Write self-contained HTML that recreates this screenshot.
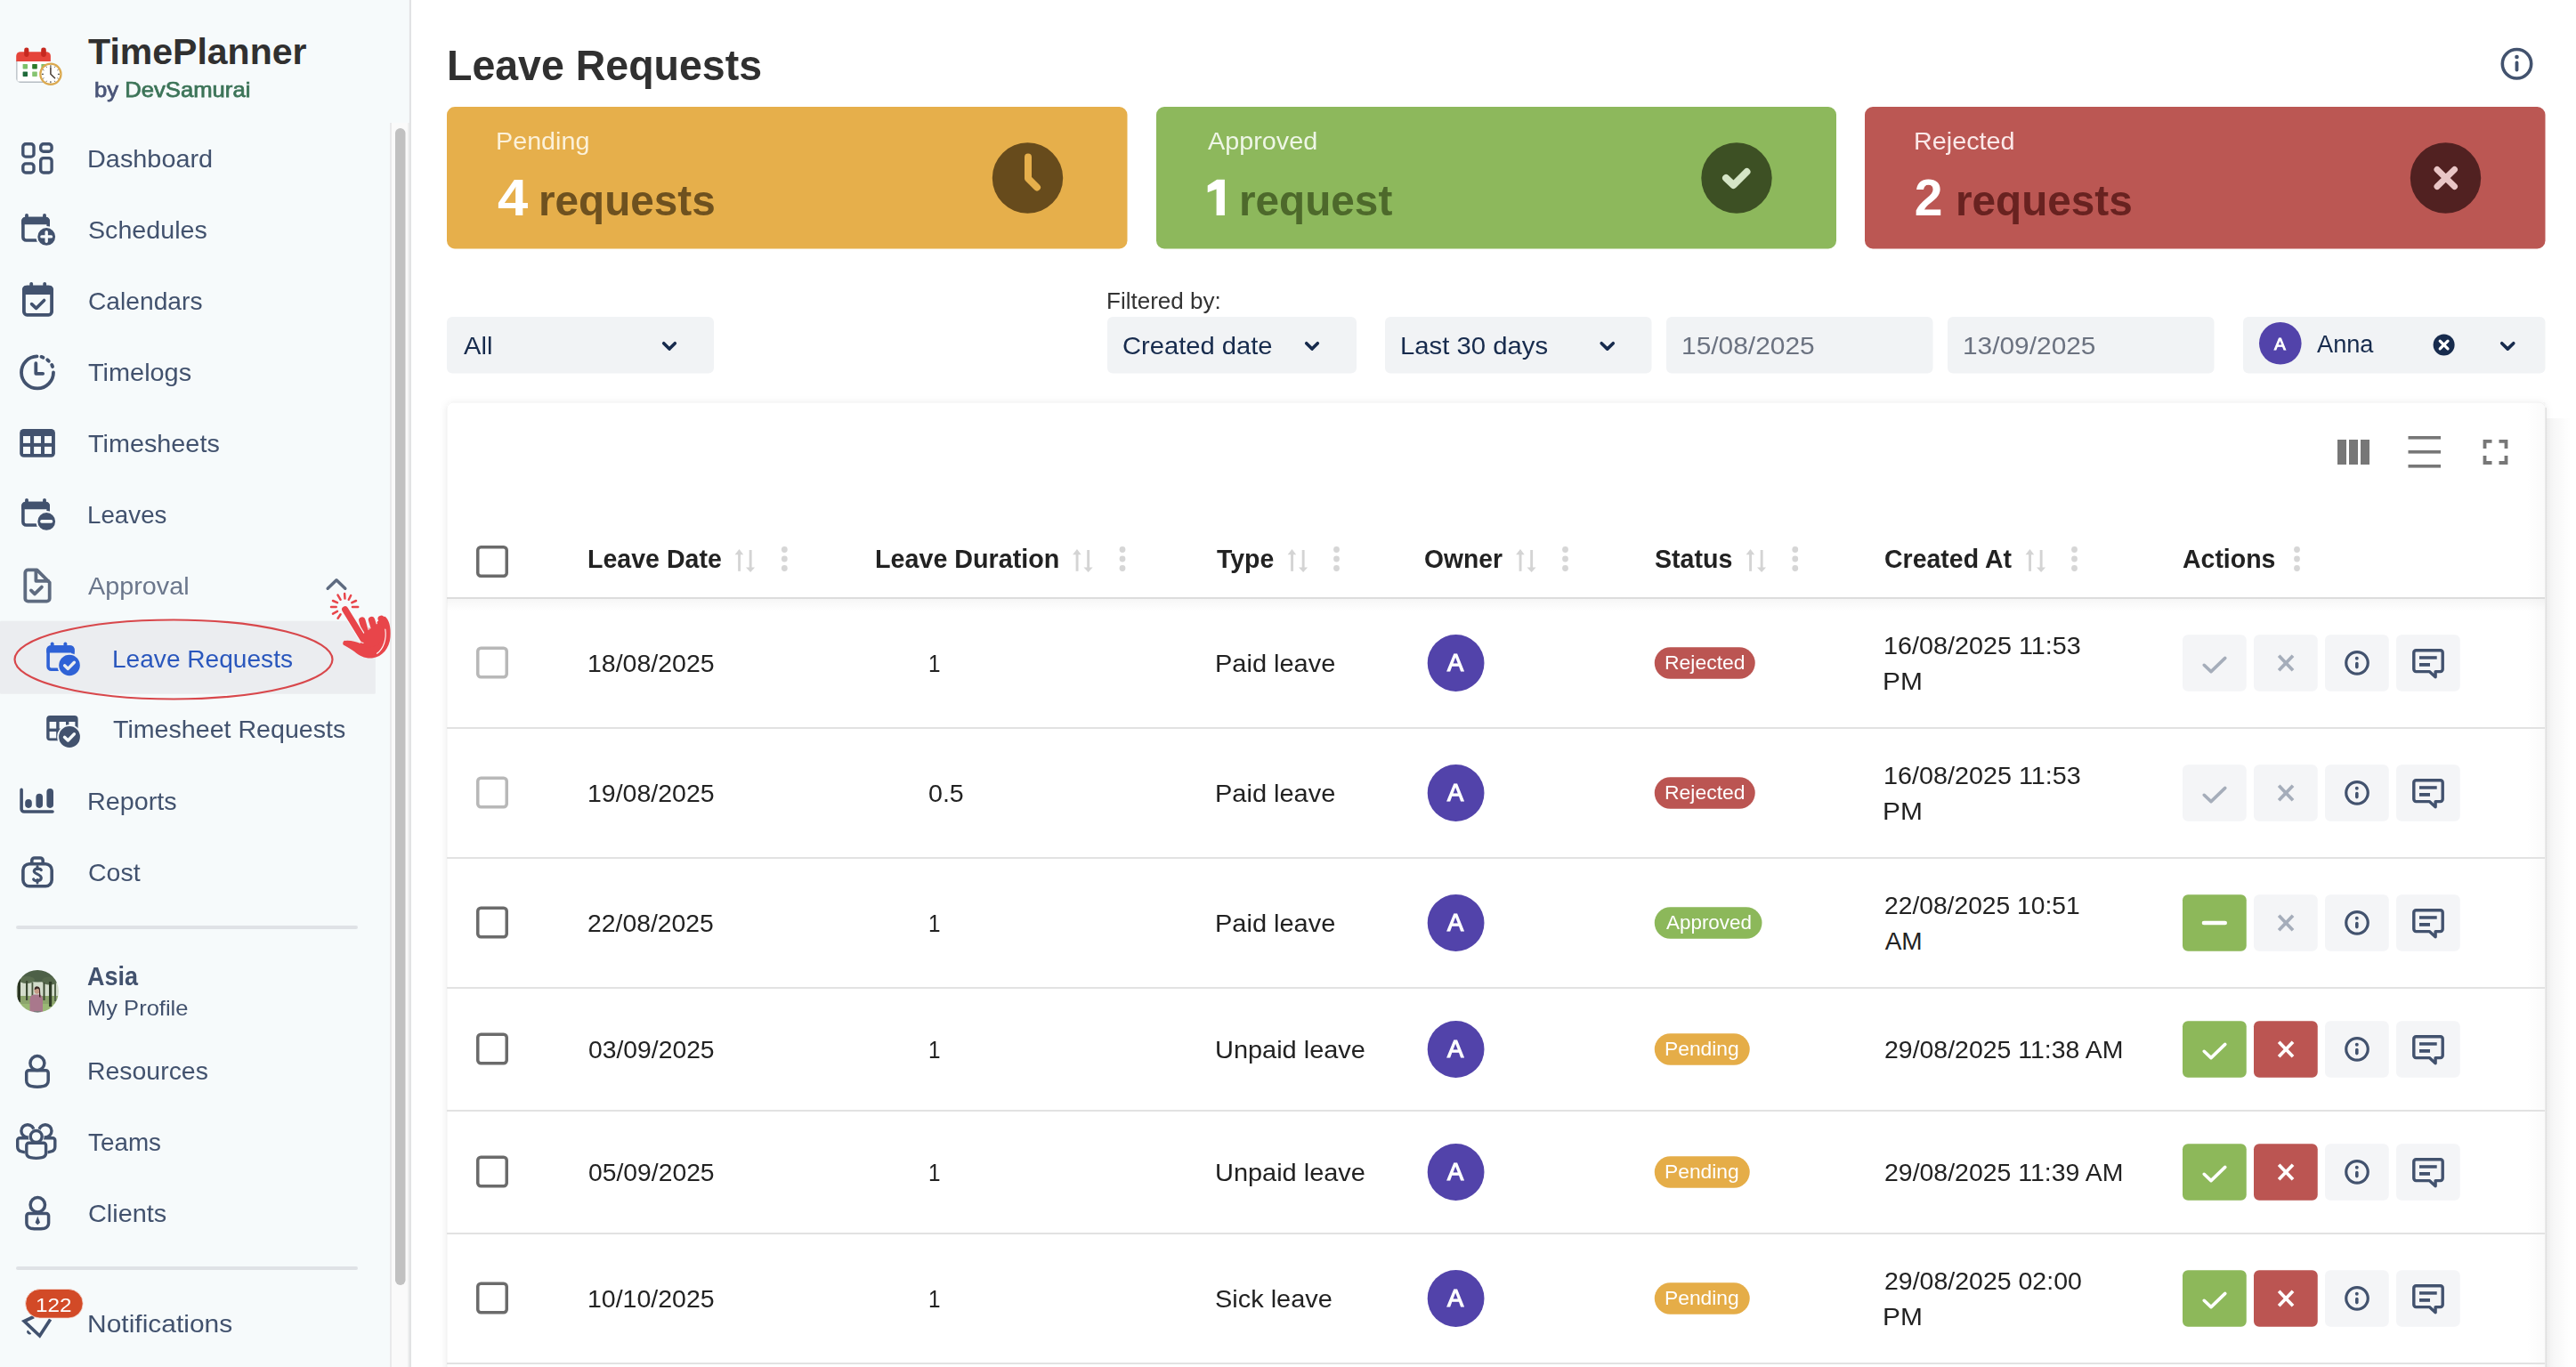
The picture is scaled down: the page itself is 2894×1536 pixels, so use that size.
<!DOCTYPE html>
<html><head><meta charset="utf-8"><title>Leave Requests - TimePlanner</title>
<style>
html,body{margin:0;padding:0;width:2894px;height:1536px;overflow:hidden;background:#fff;}
#t div{position:absolute;white-space:nowrap;font-family:"Liberation Sans", sans-serif;}
svg{position:absolute;left:0;top:0;}
</style></head><body>
<svg width="2894" height="1536" viewBox="0 0 2894 1536">
<rect x="0" y="0" width="460" height="1536" fill="#f6fafb"/>
<rect x="459.9" y="0" width="2" height="1536" fill="#e0e1e3"/>
<rect x="439.8" y="138" width="18.5" height="1398" fill="#fafafa"/><rect x="438.2" y="138" width="1.6" height="1398" fill="#e5e5e6"/>
<rect x="458.3" y="138" width="1.6" height="1398" fill="#ececec"/>
<rect x="444" y="144" width="11.5" height="1300" rx="5.75" fill="#c1c1c1"/>
<g>
<path d="M19.5 68 V88.2 a3.5 3.5 0 0 0 3.5 3.5 H52" fill="none" stroke="#b5bcc2" stroke-width="2.6"/>
<rect x="19.5" y="63" width="37.4" height="28.5" fill="#fff"/>
<path d="M18.2 69 V63 a4.8 4.8 0 0 1 4.8 -4.8 H52.1 a4.8 4.8 0 0 1 4.8 4.8 V69 Z" fill="#e5443a"/>
<rect x="27.2" y="53.6" width="5.2" height="10.4" rx="2.4" fill="#c6281f"/>
<rect x="46.2" y="53.6" width="5.6" height="10.4" rx="2.4" fill="#c6281f"/>
<rect x="25.6" y="72" width="5.4" height="5.4" rx="0.6" fill="#7cc06a"/>
<rect x="36.2" y="72" width="5.6" height="5.4" rx="0.6" fill="#2d7a2a"/>
<rect x="46.4" y="72" width="5.6" height="5.4" rx="0.6" fill="#7cc06a"/>
<rect x="25.6" y="80.4" width="5.4" height="5.5" rx="0.6" fill="#1f6a3a"/>
<rect x="36.2" y="80.4" width="5.6" height="5.5" rx="0.6" fill="#86c472"/>
<circle cx="56.9" cy="83.3" r="11.6" fill="#fff" stroke="#dba94f" stroke-width="2.2"/>
<path d="M56.90 75.30 L56.90 73.30" stroke="#3a3a3a" stroke-width="1.1"/><path d="M61.20 75.85 L61.90 74.64" stroke="#3a3a3a" stroke-width="0.8"/><path d="M64.35 79.00 L65.56 78.30" stroke="#3a3a3a" stroke-width="0.8"/><path d="M64.90 83.30 L66.90 83.30" stroke="#3a3a3a" stroke-width="1.1"/><path d="M64.35 87.60 L65.56 88.30" stroke="#3a3a3a" stroke-width="0.8"/><path d="M61.20 90.75 L61.90 91.96" stroke="#3a3a3a" stroke-width="0.8"/><path d="M56.90 91.30 L56.90 93.30" stroke="#3a3a3a" stroke-width="1.1"/><path d="M52.60 90.75 L51.90 91.96" stroke="#3a3a3a" stroke-width="0.8"/><path d="M49.45 87.60 L48.24 88.30" stroke="#3a3a3a" stroke-width="0.8"/><path d="M48.90 83.30 L46.90 83.30" stroke="#3a3a3a" stroke-width="1.1"/><path d="M49.45 79.00 L48.24 78.30" stroke="#3a3a3a" stroke-width="0.8"/><path d="M52.60 75.85 L51.90 74.64" stroke="#3a3a3a" stroke-width="0.8"/>
<path d="M56.9 76 V83.3 L61.6 87.8" stroke="#453a33" stroke-width="1.5" fill="none" stroke-linecap="round"/>
</g>
<rect x="0" y="697.8" width="421.8" height="82" rx="1" fill="#ebedf0"/>
<rect x="18" y="1040" width="384" height="4" rx="2" fill="#dfe2e6"/>
<rect x="18" y="1423" width="384" height="4" rx="2" fill="#dfe2e6"/>
<defs><clipPath id="pc"><circle cx="42.15" cy="1113.85" r="23.8"/></clipPath>
<filter id="blur1"><feGaussianBlur stdDeviation="0.7"/></filter></defs>
<g clip-path="url(#pc)"><g filter="url(#blur1)">
<rect x="16" y="1088" width="52" height="52" fill="#9fb08a"/>
<rect x="16" y="1101" width="52" height="19" fill="#d3dccb"/>
<rect x="16" y="1119" width="52" height="21" fill="#8ca56c"/>
<rect x="16" y="1128" width="52" height="12" fill="#9ab874"/>
<ellipse cx="42" cy="1094" rx="30" ry="9.5" fill="#4e6146"/>
<ellipse cx="30" cy="1101" rx="9" ry="4" fill="#5a6d50"/><ellipse cx="56" cy="1102" rx="9" ry="4.5" fill="#55684c"/>
<rect x="19.5" y="1100" width="3.5" height="26" fill="#2b3524"/><rect x="29" y="1102" width="2.2" height="22" fill="#3b4a31"/>
<rect x="35.5" y="1104" width="1.8" height="16" fill="#46553a"/><rect x="48.5" y="1104" width="2" height="20" fill="#3b4a31"/>
<rect x="55" y="1103" width="3.2" height="28" fill="#2f3b27"/><rect x="61" y="1105" width="2" height="20" fill="#53644a"/>
<path d="M33.5 1138 V1122 Q34.5 1117.5 39 1117.5 H44 Q47.5 1118 48 1122 V1138 Z" fill="#a9788c"/>
<ellipse cx="41.6" cy="1112.8" rx="3.1" ry="4" fill="#c49a86"/>
<path d="M38.5 1111.5 Q39.5 1107.5 42 1108.5 Q44.8 1108.5 45 1112 L45.5 1121 L44 1120 L44 1112 Q42 1109.5 40 1112 Z" fill="#3a2622"/>
<rect x="38" y="1136" width="8" height="3" fill="#7a7a7a"/>
</g></g>
<g fill="none" stroke="#42526e" stroke-width="3.4">
<rect x="25.8" y="161.7" width="12.2" height="14.4" rx="3.2"/>
<rect x="45.7" y="161.7" width="12.4" height="8.5" rx="3.2"/>
<rect x="25.8" y="183.9" width="12.2" height="10.1" rx="3.2"/>
<rect x="45.7" y="177.6" width="12.4" height="16.4" rx="3.2"/>
</g>
<rect x="25.900000000000002" y="245.5" width="28.299999999999997" height="24.50000000000002" rx="3.5" fill="none" stroke="#42526e" stroke-width="3.6"/><path d="M24.1 252.3 V248.2 a4.5 4.5 0 0 1 4.5 -4.5 H51.5 a4.5 4.5 0 0 1 4.5 4.5 V252.3 Z" fill="#42526e"/><rect x="28.1" y="239.89999999999998" width="3.8" height="6" rx="1.9" fill="#42526e"/><rect x="48.1" y="239.89999999999998" width="3.8" height="6" rx="1.9" fill="#42526e"/>
<circle cx="52.2" cy="265.9" r="11.8" fill="#f6fafb"/><circle cx="52.2" cy="265.9" r="9.9" fill="#42526e"/><path d="M52.2 260.6 V271.2 M46.9 265.9 H57.5" stroke="#f6fafb" stroke-width="3.4" stroke-linecap="round"/>
<rect x="26.9" y="322.59999999999997" width="31.2" height="31.2" rx="3.5" fill="none" stroke="#42526e" stroke-width="3.8"/><path d="M25 330.9 V325.2 a4.5 4.5 0 0 1 4.5 -4.5 H55.5 a4.5 4.5 0 0 1 4.5 4.5 V330.9 Z" fill="#42526e"/><rect x="33.3" y="316.9" width="3.8" height="6" rx="1.9" fill="#42526e"/><rect x="48.3" y="316.9" width="3.8" height="6" rx="1.9" fill="#42526e"/>
<path d="M35.6 341.6 L40.6 346.4 L49.6 337.4" fill="none" stroke="#42526e" stroke-width="3.6" stroke-linecap="round" stroke-linejoin="round"/>
<g fill="none" stroke="#42526e" stroke-width="3.8" stroke-linecap="round">
<path d="M41.5 400.4 A18 18 0 1 0 60 418.4"/>
<path d="M46.5 400.9 A18 18 0 0 1 48.5 401.7"/><path d="M53.2 404.3 A18 18 0 0 1 54.8 405.8"/><path d="M58.2 410.0 A18 18 0 0 1 59.1 412.0"/>
<path d="M40.3 408.2 V419.8 H48.2" stroke-linejoin="round"/>
</g>
<rect x="22.2" y="482" width="39.7" height="31.8" rx="4.5" fill="#42526e"/>
<g fill="#f6fafb"><rect x="26" y="490" width="8" height="7.9"/><rect x="38.1" y="490" width="7.9" height="7.9"/><rect x="50" y="490" width="8" height="7.9"/>
<rect x="26" y="501.9" width="8" height="8.1"/><rect x="38.1" y="501.9" width="7.9" height="8.1"/><rect x="50" y="501.9" width="8" height="8.1"/></g>
<rect x="25.900000000000002" y="565.5" width="28.299999999999997" height="24.499999999999908" rx="3.5" fill="none" stroke="#42526e" stroke-width="3.6"/><path d="M24.1 572.3 V568.2 a4.5 4.5 0 0 1 4.5 -4.5 H51.5 a4.5 4.5 0 0 1 4.5 4.5 V572.3 Z" fill="#42526e"/><rect x="28.1" y="559.9000000000001" width="3.8" height="6" rx="1.9" fill="#42526e"/><rect x="48.1" y="559.9000000000001" width="3.8" height="6" rx="1.9" fill="#42526e"/>
<circle cx="52.2" cy="585.9" r="11.8" fill="#f6fafb"/><circle cx="52.2" cy="585.9" r="9.9" fill="#42526e"/><path d="M46.9 585.9 H57.5" stroke="#f6fafb" stroke-width="3.6" stroke-linecap="round"/>
<g fill="none" stroke="#5e6b80" stroke-width="3.8" stroke-linejoin="round">
<path d="M31 640.3 H41.5 L55.7 654.5 V672.5 a3.2 3.2 0 0 1 -3.2 3.2 H31.5 a3.2 3.2 0 0 1 -3.2 -3.2 V643.5 a3.2 3.2 0 0 1 3.2 -3.2 Z"/>
<path d="M40.4 640.5 V652.8 H55.5"/>
<path d="M34.9 663.4 L39 667.4 L46.9 659.6" stroke-linecap="round"/>
</g>
<path d="M368.2 661.2 L378 651.8 L387.8 661.2" fill="none" stroke="#5e6b80" stroke-width="3.5" stroke-linecap="round" stroke-linejoin="round"/>
<rect x="54.099999999999994" y="727.0" width="27.800000000000004" height="25.199999999999953" rx="3.5" fill="none" stroke="#2f62d6" stroke-width="3.6"/><path d="M52.3 733.5 V729.7 a4.5 4.5 0 0 1 4.5 -4.5 H79.2 a4.5 4.5 0 0 1 4.5 4.5 V733.5 Z" fill="#2f62d6"/><rect x="56.8" y="721.4000000000001" width="3.8" height="6" rx="1.9" fill="#2f62d6"/><rect x="71.5" y="721.4000000000001" width="3.8" height="6" rx="1.9" fill="#2f62d6"/>
<circle cx="78" cy="747.5" r="13.6" fill="#ebedf0"/><circle cx="78" cy="747.5" r="11.8" fill="#2f62d6"/><path d="M72.6 747.8 L76.4 751.4 L83.4 744.2" fill="none" stroke="#ebedf0" stroke-width="3.4" stroke-linecap="round" stroke-linejoin="round"/>
<rect x="52.2" y="804.1" width="35.4" height="28.2" rx="4" fill="#42526e"/>
<g fill="#f6fafb"><rect x="55.6" y="811" width="7.6" height="7.6"/><rect x="66.6" y="811" width="7.4" height="7.6"/><rect x="77.4" y="811" width="7" height="7.6"/>
<rect x="55.6" y="822" width="7.6" height="7.4"/></g>
<circle cx="78" cy="828" r="13.8" fill="#f6fafb"/><circle cx="78" cy="828" r="11.9" fill="#42526e"/>
<path d="M72.5 828.3 L76.4 832 L83.4 824.8" fill="none" stroke="#f6fafb" stroke-width="3.4" stroke-linecap="round" stroke-linejoin="round"/>
<path d="M24.1 887.4 V909 a3 3 0 0 0 3 3 H59" fill="none" stroke="#42526e" stroke-width="3.6" stroke-linecap="round"/>
<g stroke="#42526e" stroke-width="7.6" stroke-linecap="round"><path d="M32 901.7 V904.1"/><path d="M44.2 895.5 V904.1"/><path d="M56.2 889.7 V904.1"/></g>
<g fill="none" stroke="#42526e" stroke-width="3.6">
<rect x="25.9" y="970.7" width="32.3" height="25.1" rx="7"/>
<path d="M35.8 970.5 V967 a3 3 0 0 1 3 -3 H45.2 a3 3 0 0 1 3 3 V970.5"/>
</g>
<path d="M46.3 977.6 C45.5 975.8 39 975 38.3 978.6 C37.6 982 46.6 982.3 46.3 986.6 C46 990.6 38.6 990.2 37.7 988" fill="none" stroke="#42526e" stroke-width="3.2" stroke-linecap="round"/>
<path d="M42 973.5 V976.5 M42 988.5 V992" stroke="#42526e" stroke-width="3" stroke-linecap="round"/>
<g fill="none" stroke="#42526e" stroke-width="3.5">
<circle cx="41.9" cy="1194.6" r="8"/>
<path d="M32.5 1202.8 H51.5 a2.7 2.7 0 0 1 2.7 2.7 V1214 a6.5 6.5 0 0 1 -5 6.4 Q41.9 1222 34.7 1220.4 a6.5 6.5 0 0 1 -5 -6.4 V1205.5 a2.7 2.7 0 0 1 2.7 -2.7 Z"/>
</g>
<g fill="none" stroke="#42526e" stroke-width="3.4">
<circle cx="31" cy="1270.8" r="7.1"/><circle cx="50.9" cy="1270.8" r="7.1"/>
<path d="M33 1278.7 H22.2 a2.5 2.5 0 0 0 -2.5 2.5 V1288.5 a5.5 5.5 0 0 0 4.5 5.4 L29.5 1295.2"/>
<path d="M48.5 1278.7 H59.3 a2.5 2.5 0 0 1 2.5 2.5 V1288.5 a5.5 5.5 0 0 1 -4.5 5.4 L52 1295.2"/>
</g>
<circle cx="40.7" cy="1277" r="9" fill="#f6fafb"/>
<path d="M27.9 1283 H53.5 V1301 H27.9Z" fill="#f6fafb"/>
<g fill="none" stroke="#42526e" stroke-width="3.4">
<circle cx="40.7" cy="1277" r="6.5"/>
<path d="M32.4 1284.3 H49 a2.6 2.6 0 0 1 2.6 2.6 V1295.3 a5.5 5.5 0 0 1 -4.5 5.4 Q40.7 1302 34.3 1300.7 a5.5 5.5 0 0 1 -4.5 -5.4 V1286.9 a2.6 2.6 0 0 1 2.6 -2.6 Z"/>
</g>
<g fill="none" stroke="#42526e" stroke-width="3.5">
<circle cx="42.3" cy="1353.7" r="8.2"/>
<path d="M32.6 1363.4 H52 a2.6 2.6 0 0 1 2.6 2.6 V1374.3 a6 6 0 0 1 -4.9 5.9 Q42.3 1381.4 34.8 1380.2 a6 6 0 0 1 -4.9 -5.9 V1366 a2.6 2.6 0 0 1 2.6 -2.6 Z"/>
</g>
<path d="M42.3 1366.5 L45 1373.8 L42.3 1376.2 L39.6 1373.8 Z" fill="#42526e"/>
<path d="M38 1479.5 L27.2 1484.6 L44.6 1501 L56.6 1482.5" fill="none" stroke="#42526e" stroke-width="3.7" stroke-linejoin="miter"/>
<path d="M31.2 1494.5 a2.8 2.8 0 1 0 4 3.9 Z" fill="#42526e"/>
<rect x="28.6" y="1448.5" width="64.6" height="32.6" rx="16.3" fill="#d24a27" stroke="#f6e2dc" stroke-width="0.8"/>
<ellipse cx="195" cy="741" rx="178.5" ry="44.5" fill="none" stroke="#d8474b" stroke-width="2.2"/>
<g stroke="#e8454a" stroke-linecap="round" stroke-width="2.5" fill="none">
<path d="M379.5 668.6 L382.6 673.8"/><path d="M387.1 667 L387.5 672.6"/><path d="M394.2 669 L391.8 673.8"/>
<path d="M374 675 L379 677.2"/><path d="M400 675 L395.3 677.2"/><path d="M372 681.9 L377.7 681.9"/><path d="M402.2 681.9 L396 681.9"/>
<path d="M374 689.6 L379 686.9"/><path d="M379.6 694.8 L382.6 690.2"/>
</g>
<g fill="#e8454a">
<path d="M404 713 L432 692.5 C437 695 439.5 705 438.5 716 C437.5 728 430 738 418 739.5 C410 740 404 737 398 732 C394 729 390 727 387.5 725.5 a2.8 2.8 0 0 1 1.2 -5.6 C394 719.5 400 721 405 723 Z"/>
</g>

<path d="M431.5 703 L428.2 695.3" stroke="#e8454a" stroke-width="7.4" stroke-linecap="round" fill="none"/>
<path d="M421 708 L417.5 696.5" stroke="#f6fafb" stroke-width="9.8" stroke-linecap="round" fill="none"/>
<path d="M421 708 L417.5 696.5" stroke="#e8454a" stroke-width="7.4" stroke-linecap="round" fill="none"/>
<path d="M411 712 L406.8 697" stroke="#f6fafb" stroke-width="9.8" stroke-linecap="round" fill="none"/>
<path d="M411 712 L406.8 697" stroke="#e8454a" stroke-width="7.4" stroke-linecap="round" fill="none"/>
<path d="M408 718 L387.7 684.8" stroke="#f6fafb" stroke-width="9.6" stroke-linecap="round" fill="none"/>
<path d="M408 718 L387.7 684.8" stroke="#e8454a" stroke-width="7.2" stroke-linecap="round" fill="none"/>
<path d="M404 715 L412 728 L425 725 L434 708 L425 700 Z" fill="#e8454a"/>
<path d="M432.8 707 C434.5 718 431 729 423.5 734.3" fill="none" stroke="#fff" stroke-width="1.1" stroke-linecap="round"/>

<circle cx="2827.5" cy="71.75" r="16.2" fill="none" stroke="#42526e" stroke-width="3.6"/><circle cx="2827.5" cy="64" r="2.3" fill="#42526e"/><rect x="2825.6" y="68.5" width="3.8" height="12" rx="1.9" fill="#42526e"/>
<rect x="502" y="120" width="764.5" height="159.5" rx="9" fill="#e6af4b"/>
<circle cx="1154.5" cy="200" r="39.7" fill="#674b1c"/>
<rect x="1299" y="120" width="764" height="159.5" rx="9" fill="#8db85c"/>
<path d="M1367.2 201.7 H1375.9 V242.1 H1366.6 V212.6 L1356.7 216.2 V208.6 Z" fill="#fff"/>
<circle cx="1951" cy="200" r="39.7" fill="#3d5024"/>
<rect x="2095" y="120" width="764.5" height="159.5" rx="9" fill="#bb5753"/>
<circle cx="2747.5" cy="200" r="39.7" fill="#512121"/>
<path d="M1155 176.5 V200.5 L1165 210.5" fill="none" stroke="#e6af4b" stroke-width="8" stroke-linecap="round" stroke-linejoin="round"/>
<path d="M1939 200 L1947.5 208 L1962.5 193" fill="none" stroke="#d5e5c6" stroke-width="8" stroke-linecap="round" stroke-linejoin="round"/>
<path d="M2738.5 197.2 L2756.5 207.2 M2756.5 197.2 L2738.5 207.2" fill="none" stroke="#e9c6c6" stroke-width="0"/>
<path d="M2738 190.5 L2757.5 209.5 M2757.5 190.5 L2738 209.5" fill="none" stroke="#e9c6c6" stroke-width="7" stroke-linecap="round"/>
<rect x="502" y="356" width="300" height="63.5" rx="6" fill="#f1f3f5"/>
<rect x="1244" y="356" width="280" height="63.5" rx="6" fill="#f1f3f5"/>
<rect x="1556" y="356" width="299.5" height="63.5" rx="6" fill="#f1f3f5"/>
<rect x="1872" y="356" width="299.5" height="63.5" rx="6" fill="#f1f3f5"/>
<rect x="2188" y="356" width="299.5" height="63.5" rx="6" fill="#f1f3f5"/>
<rect x="2520" y="356" width="339.5" height="63.5" rx="6" fill="#f1f3f5"/>
<path d="M745.7 385.7 L752.0 392.1 L758.3 385.7" fill="none" stroke="#172b4d" stroke-width="3.6" stroke-linecap="round" stroke-linejoin="round"/>
<path d="M1467.7 385.7 L1474.0 392.1 L1480.3 385.7" fill="none" stroke="#172b4d" stroke-width="3.6" stroke-linecap="round" stroke-linejoin="round"/>
<path d="M1799.2 385.7 L1805.75 392.1 L1812.3 385.7" fill="none" stroke="#172b4d" stroke-width="3.6" stroke-linecap="round" stroke-linejoin="round"/>
<circle cx="2561.8" cy="385.8" r="23.8" fill="#5243aa"/>
<circle cx="2745.6" cy="387.5" r="12" fill="#172b4d"/><path d="M2741.2 383.1 L2750 391.9 M2750 383.1 L2741.2 391.9" stroke="#fff" stroke-width="3.2" stroke-linecap="round"/>
<path d="M2810.7 385.7 L2817.25 392.1 L2823.8 385.7" fill="none" stroke="#172b4d" stroke-width="3.6" stroke-linecap="round" stroke-linejoin="round"/>
<defs><filter id="sh" x="-2%" y="-5%" width="104%" height="110%"><feDropShadow dx="0" dy="1" stdDeviation="4.5" flood-color="#000" flood-opacity="0.09"/></filter></defs>
<rect x="502" y="452" width="2358" height="1200" rx="7" fill="#fff" filter="url(#sh)"/><rect x="502.25" y="452.25" width="2357.5" height="1200" rx="7" fill="none" stroke="#ececec" stroke-width="0.5"/>
<g fill="#777"><rect x="2626" y="494" width="10" height="28"/><rect x="2639" y="494" width="10" height="28"/><rect x="2652" y="494" width="10" height="28"/></g>
<g fill="#777"><rect x="2705.5" y="490" width="36.5" height="3.6"/><rect x="2705.5" y="506" width="36.5" height="3.6"/><rect x="2705.5" y="522" width="36.5" height="3.6"/></g>
<path d="M2791.5 504 V495.8 H2799.5 M2807.5 495.8 H2815.5 V504 M2815.5 512 V520 H2807.5 M2799.5 520 H2791.5 V512" fill="none" stroke="#777" stroke-width="3.8"/>
<rect x="536.75" y="614.75" width="32.5" height="32.5" rx="3.5" fill="none" stroke="#6b6b6b" stroke-width="3.5"/>
<g fill="#d4d4d4"><path d="M825.6 623.2 L830.5 617 L835.2 623.2 Z"/><rect x="829.1" y="621" width="2.9" height="20.8"/><rect x="841.7" y="618" width="2.9" height="20.5"/><path d="M838 637.6 L843.1 643 L848.1 637.6 Z"/></g>
<g fill="#d6d6d6"><circle cx="881.3" cy="617.5" r="3.4"/><circle cx="881.3" cy="628" r="3.4"/><circle cx="881.3" cy="638.5" r="3.4"/></g>
<g fill="#d4d4d4"><path d="M1205.1 623.2 L1210.0 617 L1214.7 623.2 Z"/><rect x="1208.6" y="621" width="2.9" height="20.8"/><rect x="1221.2" y="618" width="2.9" height="20.5"/><path d="M1217.5 637.6 L1222.6 643 L1227.6 637.6 Z"/></g>
<g fill="#d6d6d6"><circle cx="1261" cy="617.5" r="3.4"/><circle cx="1261" cy="628" r="3.4"/><circle cx="1261" cy="638.5" r="3.4"/></g>
<g fill="#d4d4d4"><path d="M1446.6 623.2 L1451.5 617 L1456.2 623.2 Z"/><rect x="1450.1" y="621" width="2.9" height="20.8"/><rect x="1462.7" y="618" width="2.9" height="20.5"/><path d="M1459 637.6 L1464.1 643 L1469.1 637.6 Z"/></g>
<g fill="#d6d6d6"><circle cx="1501.5" cy="617.5" r="3.4"/><circle cx="1501.5" cy="628" r="3.4"/><circle cx="1501.5" cy="638.5" r="3.4"/></g>
<g fill="#d4d4d4"><path d="M1703.1 623.2 L1708.0 617 L1712.7 623.2 Z"/><rect x="1706.6" y="621" width="2.9" height="20.8"/><rect x="1719.2" y="618" width="2.9" height="20.5"/><path d="M1715.5 637.6 L1720.6 643 L1725.6 637.6 Z"/></g>
<g fill="#d6d6d6"><circle cx="1758.5" cy="617.5" r="3.4"/><circle cx="1758.5" cy="628" r="3.4"/><circle cx="1758.5" cy="638.5" r="3.4"/></g>
<g fill="#d4d4d4"><path d="M1961.6 623.2 L1966.5 617 L1971.2 623.2 Z"/><rect x="1965.1" y="621" width="2.9" height="20.8"/><rect x="1977.7" y="618" width="2.9" height="20.5"/><path d="M1974 637.6 L1979.1 643 L1984.1 637.6 Z"/></g>
<g fill="#d6d6d6"><circle cx="2016.75" cy="617.5" r="3.4"/><circle cx="2016.75" cy="628" r="3.4"/><circle cx="2016.75" cy="638.5" r="3.4"/></g>
<g fill="#d4d4d4"><path d="M2275.6 623.2 L2280.5 617 L2285.2 623.2 Z"/><rect x="2279.1" y="621" width="2.9" height="20.8"/><rect x="2291.7" y="618" width="2.9" height="20.5"/><path d="M2288 637.6 L2293.1 643 L2298.1 637.6 Z"/></g>
<g fill="#d6d6d6"><circle cx="2330.5" cy="617.5" r="3.4"/><circle cx="2330.5" cy="628" r="3.4"/><circle cx="2330.5" cy="638.5" r="3.4"/></g>
<g fill="#d6d6d6"><circle cx="2580.5" cy="617.5" r="3.4"/><circle cx="2580.5" cy="628" r="3.4"/><circle cx="2580.5" cy="638.5" r="3.4"/></g>
<defs><linearGradient id="rs" x1="0" y1="0" x2="1" y2="0"><stop offset="0" stop-color="#000" stop-opacity="0.045"/><stop offset="1" stop-color="#000" stop-opacity="0"/></linearGradient><linearGradient id="ri" x1="0" y1="0" x2="1" y2="0"><stop offset="0" stop-color="#000" stop-opacity="0"/><stop offset="1" stop-color="#000" stop-opacity="0.02"/></linearGradient></defs>
<rect x="2860.5" y="470" width="28" height="1066" fill="url(#rs)"/><rect x="2838" y="452" width="21.5" height="1084" fill="url(#ri)"/><rect x="2859.6" y="458" width="1.2" height="1078" fill="#dcdcdc"/>
<rect x="502" y="671" width="2357" height="2" fill="#dcdcdc"/>
<defs><linearGradient id="hs" x1="0" y1="0" x2="0" y2="1"><stop offset="0" stop-color="#000" stop-opacity="0.035"/><stop offset="1" stop-color="#000" stop-opacity="0"/></linearGradient></defs>
<rect x="502" y="673" width="2357" height="14" fill="url(#hs)"/>
<rect x="502" y="817" width="2357" height="2" fill="#e2e2e2"/>
<rect x="536.75" y="728.25" width="32.5" height="32.5" rx="3.5" fill="none" stroke="#b8b8b8" stroke-width="3.5"/>
<circle cx="1635.6" cy="745.0" r="31.9" fill="#5243aa"/>
<rect x="1858.75" y="727.25" width="113" height="35.5" rx="17.75" fill="#bb5552"/>
<rect x="2452" y="713.25" width="71.75" height="63.5" rx="6" fill="#f4f5f7"/>
<rect x="2532" y="713.25" width="71.75" height="63.5" rx="6" fill="#f4f5f7"/>
<rect x="2612" y="713.25" width="71.75" height="63.5" rx="6" fill="#f4f5f7"/>
<rect x="2692" y="713.25" width="71.75" height="63.5" rx="6" fill="#f4f5f7"/>
<path d="M2476.2 747.3 L2484 754.6 L2499.8 739.4" fill="none" stroke="#a5adba" stroke-width="3.6" stroke-linecap="round" stroke-linejoin="round"/>
<path d="M2560.2 736.8 L2576 753.2 M2576 736.8 L2560.2 753.2" fill="none" stroke="#a5adba" stroke-width="3.8" stroke-linecap="butt"/>
<circle cx="2648" cy="744.85" r="12.25" fill="none" stroke="#42526e" stroke-width="3.2"/><circle cx="2647.8" cy="739.8" r="1.95" fill="#42526e"/><rect x="2646" y="743.8" width="3.6" height="7.6" rx="1.8" fill="#42526e"/>
<path d="M2714.3 730.7 H2741.7 a2.5 2.5 0 0 1 2.5 2.5 V752.1 a2.5 2.5 0 0 1 -2.5 2.5 H2736.1 V760.8 L2729.3 754.6 H2714.3 a2.5 2.5 0 0 1 -2.5 -2.5 V733.2 a2.5 2.5 0 0 1 2.5 -2.5 Z" fill="none" stroke="#42526e" stroke-width="3.4" stroke-linejoin="round"/>
<rect x="2718" y="737.2" width="19.7" height="3.5" fill="#42526e"/><rect x="2718" y="745.0" width="12" height="3.8" fill="#42526e"/>
<rect x="502" y="963" width="2357" height="2" fill="#e2e2e2"/>
<rect x="536.75" y="874.25" width="32.5" height="32.5" rx="3.5" fill="none" stroke="#b8b8b8" stroke-width="3.5"/>
<circle cx="1635.6" cy="891.0" r="31.9" fill="#5243aa"/>
<rect x="1858.75" y="873.25" width="113" height="35.5" rx="17.75" fill="#bb5552"/>
<rect x="2452" y="859.25" width="71.75" height="63.5" rx="6" fill="#f4f5f7"/>
<rect x="2532" y="859.25" width="71.75" height="63.5" rx="6" fill="#f4f5f7"/>
<rect x="2612" y="859.25" width="71.75" height="63.5" rx="6" fill="#f4f5f7"/>
<rect x="2692" y="859.25" width="71.75" height="63.5" rx="6" fill="#f4f5f7"/>
<path d="M2476.2 893.3 L2484 900.6 L2499.8 885.4" fill="none" stroke="#a5adba" stroke-width="3.6" stroke-linecap="round" stroke-linejoin="round"/>
<path d="M2560.2 882.8 L2576 899.2 M2576 882.8 L2560.2 899.2" fill="none" stroke="#a5adba" stroke-width="3.8" stroke-linecap="butt"/>
<circle cx="2648" cy="890.85" r="12.25" fill="none" stroke="#42526e" stroke-width="3.2"/><circle cx="2647.8" cy="885.8" r="1.95" fill="#42526e"/><rect x="2646" y="889.8" width="3.6" height="7.6" rx="1.8" fill="#42526e"/>
<path d="M2714.3 876.7 H2741.7 a2.5 2.5 0 0 1 2.5 2.5 V898.1 a2.5 2.5 0 0 1 -2.5 2.5 H2736.1 V906.8 L2729.3 900.6 H2714.3 a2.5 2.5 0 0 1 -2.5 -2.5 V879.2 a2.5 2.5 0 0 1 2.5 -2.5 Z" fill="none" stroke="#42526e" stroke-width="3.4" stroke-linejoin="round"/>
<rect x="2718" y="883.2" width="19.7" height="3.5" fill="#42526e"/><rect x="2718" y="891.0" width="12" height="3.8" fill="#42526e"/>
<rect x="502" y="1109" width="2357" height="2" fill="#e2e2e2"/>
<rect x="536.75" y="1020.25" width="32.5" height="32.5" rx="3.5" fill="none" stroke="#6b6b6b" stroke-width="3.5"/>
<circle cx="1635.6" cy="1037.0" r="31.9" fill="#5243aa"/>
<rect x="1858.75" y="1019.25" width="120.75" height="35.5" rx="17.75" fill="#8cb85a"/>
<rect x="2452" y="1005.25" width="71.75" height="63.5" rx="6" fill="#8db85a"/>
<rect x="2532" y="1005.25" width="71.75" height="63.5" rx="6" fill="#f4f5f7"/>
<rect x="2612" y="1005.25" width="71.75" height="63.5" rx="6" fill="#f4f5f7"/>
<rect x="2692" y="1005.25" width="71.75" height="63.5" rx="6" fill="#f4f5f7"/>
<path d="M2476 1037.0 H2499.7" stroke="#fff" stroke-width="4.6" stroke-linecap="round"/>
<path d="M2560.2 1028.8 L2576 1045.2 M2576 1028.8 L2560.2 1045.2" fill="none" stroke="#a5adba" stroke-width="3.8" stroke-linecap="butt"/>
<circle cx="2648" cy="1036.85" r="12.25" fill="none" stroke="#42526e" stroke-width="3.2"/><circle cx="2647.8" cy="1031.8" r="1.95" fill="#42526e"/><rect x="2646" y="1035.8" width="3.6" height="7.6" rx="1.8" fill="#42526e"/>
<path d="M2714.3 1022.7 H2741.7 a2.5 2.5 0 0 1 2.5 2.5 V1044.1 a2.5 2.5 0 0 1 -2.5 2.5 H2736.1 V1052.8 L2729.3 1046.6 H2714.3 a2.5 2.5 0 0 1 -2.5 -2.5 V1025.2 a2.5 2.5 0 0 1 2.5 -2.5 Z" fill="none" stroke="#42526e" stroke-width="3.4" stroke-linejoin="round"/>
<rect x="2718" y="1029.2" width="19.7" height="3.5" fill="#42526e"/><rect x="2718" y="1037.0" width="12" height="3.8" fill="#42526e"/>
<rect x="502" y="1247" width="2357" height="2" fill="#e2e2e2"/>
<rect x="536.75" y="1162.25" width="32.5" height="32.5" rx="3.5" fill="none" stroke="#6b6b6b" stroke-width="3.5"/>
<circle cx="1635.6" cy="1179.0" r="31.9" fill="#5243aa"/>
<rect x="1858.75" y="1161.25" width="107" height="35.5" rx="17.75" fill="#e5ad48"/>
<rect x="2452" y="1147.25" width="71.75" height="63.5" rx="6" fill="#8db85a"/>
<rect x="2532" y="1147.25" width="71.75" height="63.5" rx="6" fill="#bb5552"/>
<rect x="2612" y="1147.25" width="71.75" height="63.5" rx="6" fill="#f4f5f7"/>
<rect x="2692" y="1147.25" width="71.75" height="63.5" rx="6" fill="#f4f5f7"/>
<path d="M2476.2 1181.3 L2484 1188.6 L2499.8 1173.4" fill="none" stroke="#fff" stroke-width="3.6" stroke-linecap="round" stroke-linejoin="round"/>
<path d="M2560.2 1170.8 L2576 1187.2 M2576 1170.8 L2560.2 1187.2" fill="none" stroke="#fff" stroke-width="3.8" stroke-linecap="butt"/>
<circle cx="2648" cy="1178.85" r="12.25" fill="none" stroke="#42526e" stroke-width="3.2"/><circle cx="2647.8" cy="1173.8" r="1.95" fill="#42526e"/><rect x="2646" y="1177.8" width="3.6" height="7.6" rx="1.8" fill="#42526e"/>
<path d="M2714.3 1164.7 H2741.7 a2.5 2.5 0 0 1 2.5 2.5 V1186.1 a2.5 2.5 0 0 1 -2.5 2.5 H2736.1 V1194.8 L2729.3 1188.6 H2714.3 a2.5 2.5 0 0 1 -2.5 -2.5 V1167.2 a2.5 2.5 0 0 1 2.5 -2.5 Z" fill="none" stroke="#42526e" stroke-width="3.4" stroke-linejoin="round"/>
<rect x="2718" y="1171.2" width="19.7" height="3.5" fill="#42526e"/><rect x="2718" y="1179.0" width="12" height="3.8" fill="#42526e"/>
<rect x="502" y="1385" width="2357" height="2" fill="#e2e2e2"/>
<rect x="536.75" y="1300.25" width="32.5" height="32.5" rx="3.5" fill="none" stroke="#6b6b6b" stroke-width="3.5"/>
<circle cx="1635.6" cy="1317.0" r="31.9" fill="#5243aa"/>
<rect x="1858.75" y="1299.25" width="107" height="35.5" rx="17.75" fill="#e5ad48"/>
<rect x="2452" y="1285.25" width="71.75" height="63.5" rx="6" fill="#8db85a"/>
<rect x="2532" y="1285.25" width="71.75" height="63.5" rx="6" fill="#bb5552"/>
<rect x="2612" y="1285.25" width="71.75" height="63.5" rx="6" fill="#f4f5f7"/>
<rect x="2692" y="1285.25" width="71.75" height="63.5" rx="6" fill="#f4f5f7"/>
<path d="M2476.2 1319.3 L2484 1326.6 L2499.8 1311.4" fill="none" stroke="#fff" stroke-width="3.6" stroke-linecap="round" stroke-linejoin="round"/>
<path d="M2560.2 1308.8 L2576 1325.2 M2576 1308.8 L2560.2 1325.2" fill="none" stroke="#fff" stroke-width="3.8" stroke-linecap="butt"/>
<circle cx="2648" cy="1316.85" r="12.25" fill="none" stroke="#42526e" stroke-width="3.2"/><circle cx="2647.8" cy="1311.8" r="1.95" fill="#42526e"/><rect x="2646" y="1315.8" width="3.6" height="7.6" rx="1.8" fill="#42526e"/>
<path d="M2714.3 1302.7 H2741.7 a2.5 2.5 0 0 1 2.5 2.5 V1324.1 a2.5 2.5 0 0 1 -2.5 2.5 H2736.1 V1332.8 L2729.3 1326.6 H2714.3 a2.5 2.5 0 0 1 -2.5 -2.5 V1305.2 a2.5 2.5 0 0 1 2.5 -2.5 Z" fill="none" stroke="#42526e" stroke-width="3.4" stroke-linejoin="round"/>
<rect x="2718" y="1309.2" width="19.7" height="3.5" fill="#42526e"/><rect x="2718" y="1317.0" width="12" height="3.8" fill="#42526e"/>
<rect x="502" y="1531" width="2357" height="2" fill="#e2e2e2"/>
<rect x="536.75" y="1442.25" width="32.5" height="32.5" rx="3.5" fill="none" stroke="#6b6b6b" stroke-width="3.5"/>
<circle cx="1635.6" cy="1459.0" r="31.9" fill="#5243aa"/>
<rect x="1858.75" y="1441.25" width="107" height="35.5" rx="17.75" fill="#e5ad48"/>
<rect x="2452" y="1427.25" width="71.75" height="63.5" rx="6" fill="#8db85a"/>
<rect x="2532" y="1427.25" width="71.75" height="63.5" rx="6" fill="#bb5552"/>
<rect x="2612" y="1427.25" width="71.75" height="63.5" rx="6" fill="#f4f5f7"/>
<rect x="2692" y="1427.25" width="71.75" height="63.5" rx="6" fill="#f4f5f7"/>
<path d="M2476.2 1461.3 L2484 1468.6 L2499.8 1453.4" fill="none" stroke="#fff" stroke-width="3.6" stroke-linecap="round" stroke-linejoin="round"/>
<path d="M2560.2 1450.8 L2576 1467.2 M2576 1450.8 L2560.2 1467.2" fill="none" stroke="#fff" stroke-width="3.8" stroke-linecap="butt"/>
<circle cx="2648" cy="1458.85" r="12.25" fill="none" stroke="#42526e" stroke-width="3.2"/><circle cx="2647.8" cy="1453.8" r="1.95" fill="#42526e"/><rect x="2646" y="1457.8" width="3.6" height="7.6" rx="1.8" fill="#42526e"/>
<path d="M2714.3 1444.7 H2741.7 a2.5 2.5 0 0 1 2.5 2.5 V1466.1 a2.5 2.5 0 0 1 -2.5 2.5 H2736.1 V1474.8 L2729.3 1468.6 H2714.3 a2.5 2.5 0 0 1 -2.5 -2.5 V1447.2 a2.5 2.5 0 0 1 2.5 -2.5 Z" fill="none" stroke="#42526e" stroke-width="3.4" stroke-linejoin="round"/>
<rect x="2718" y="1451.2" width="19.7" height="3.5" fill="#42526e"/><rect x="2718" y="1459.0" width="12" height="3.8" fill="#42526e"/>
</svg>
<div id="t">
<div style="left:99.10px;top:38px;font-size:41px;line-height:41px;color:#303030;font-weight:700;letter-spacing:0px;">TimePlanner</div>
<div style="left:106.46px;top:89px;font-size:24px;line-height:24px;color:#4a5578;font-weight:400;letter-spacing:0px;transform:scaleX(1.0688);transform-origin:0 0;-webkit-text-stroke:0.75px currentColor;">by <span style="color:#3c7458">DevSamurai</span></div>
<div style="left:97.67px;top:165px;font-size:28px;line-height:28px;color:#42526e;font-weight:400;letter-spacing:0px;transform:scaleX(1.0303);transform-origin:0 0;">Dashboard</div>
<div style="left:98.54px;top:245px;font-size:28px;line-height:28px;color:#42526e;font-weight:400;letter-spacing:0px;transform:scaleX(1.0228);transform-origin:0 0;">Schedules</div>
<div style="left:98.62px;top:325px;font-size:28px;line-height:28px;color:#42526e;font-weight:400;letter-spacing:0px;transform:scaleX(1.0070);transform-origin:0 0;">Calendars</div>
<div style="left:99.42px;top:405px;font-size:28px;line-height:28px;color:#42526e;font-weight:400;letter-spacing:0px;transform:scaleX(1.0318);transform-origin:0 0;">Timelogs</div>
<div style="left:99.42px;top:485px;font-size:28px;line-height:28px;color:#42526e;font-weight:400;letter-spacing:0px;transform:scaleX(1.0286);transform-origin:0 0;">Timesheets</div>
<div style="left:97.77px;top:565px;font-size:28px;line-height:28px;color:#42526e;font-weight:400;letter-spacing:0px;transform:scaleX(0.9906);transform-origin:0 0;">Leaves</div>
<div style="left:97.68px;top:887px;font-size:28px;line-height:28px;color:#42526e;font-weight:400;letter-spacing:0px;transform:scaleX(1.0275);transform-origin:0 0;">Reports</div>
<div style="left:98.60px;top:967px;font-size:28px;line-height:28px;color:#42526e;font-weight:400;letter-spacing:0px;transform:scaleX(1.0170);transform-origin:0 0;">Cost</div>
<div style="left:97.71px;top:1190px;font-size:28px;line-height:28px;color:#42526e;font-weight:400;letter-spacing:0px;transform:scaleX(1.0154);transform-origin:0 0;">Resources</div>
<div style="left:99.45px;top:1270px;font-size:28px;line-height:28px;color:#42526e;font-weight:400;letter-spacing:0px;transform:scaleX(0.9941);transform-origin:0 0;">Teams</div>
<div style="left:98.58px;top:1350px;font-size:28px;line-height:28px;color:#42526e;font-weight:400;letter-spacing:0px;transform:scaleX(1.0312);transform-origin:0 0;">Clients</div>
<div style="left:97.58px;top:1474px;font-size:28px;line-height:28px;color:#42526e;font-weight:400;letter-spacing:0px;transform:scaleX(1.0705);transform-origin:0 0;">Notifications</div>
<div style="left:99.04px;top:645px;font-size:28px;line-height:28px;color:#6b778c;font-weight:400;letter-spacing:0px;transform:scaleX(1.0280);transform-origin:0 0;">Approval</div>
<div style="left:125.54px;top:727px;font-size:28px;line-height:28px;color:#2a57bd;font-weight:400;letter-spacing:0px;transform:scaleX(1.0032);transform-origin:0 0;">Leave Requests</div>
<div style="left:127.23px;top:806px;font-size:28px;line-height:28px;color:#42526e;font-weight:400;letter-spacing:0px;transform:scaleX(1.0217);transform-origin:0 0;">Timesheet Requests</div>
<div style="left:98.43px;top:1083px;font-size:29px;line-height:29px;color:#42526e;font-weight:700;letter-spacing:0px;transform:scaleX(0.9308);transform-origin:0 0;">Asia</div>
<div style="left:97.90px;top:1121px;font-size:24px;line-height:24px;color:#42526e;font-weight:400;letter-spacing:0px;transform:scaleX(1.0634);transform-origin:0 0;">My Profile</div>
<div style="left:40.45px;top:1456px;font-size:22.5px;line-height:22.5px;color:#fff;font-weight:400;letter-spacing:0px;transform:scaleX(1.0797);transform-origin:0 0;">122</div>
<div style="left:501.77px;top:49px;font-size:49px;line-height:49px;color:#303030;font-weight:700;letter-spacing:0px;transform:scaleX(0.9489);transform-origin:0 0;">Leave Requests</div>
<div style="left:557.48px;top:145px;font-size:28px;line-height:28px;color:#fcf1d9;font-weight:400;letter-spacing:0px;transform:scaleX(1.0258);transform-origin:0 0;">Pending</div>
<div style="left:558.82px;top:194px;font-size:57px;line-height:57px;color:#fff;font-weight:700;letter-spacing:0px;transform:scaleX(1.0811);transform-origin:0 0;">4</div>
<div style="left:605.49px;top:202px;font-size:48px;line-height:48px;color:#6e511f;font-weight:700;letter-spacing:0px;transform:scaleX(0.9934);transform-origin:0 0;">requests</div>
<div style="left:1356.54px;top:145px;font-size:28px;line-height:28px;color:#eef6e6;font-weight:400;letter-spacing:0px;transform:scaleX(1.0279);transform-origin:0 0;">Approved</div>
<div style="left:1392.23px;top:202px;font-size:48px;line-height:48px;color:#4d692b;font-weight:700;letter-spacing:0px;transform:scaleX(0.9936);transform-origin:0 0;">request</div>
<div style="left:2150.48px;top:145px;font-size:28px;line-height:28px;color:#fbe8e8;font-weight:400;letter-spacing:0px;transform:scaleX(1.0270);transform-origin:0 0;">Rejected</div>
<div style="left:2150.75px;top:194px;font-size:57px;line-height:57px;color:#fff;font-weight:700;letter-spacing:0px;">2</div>
<div style="left:2196.74px;top:202px;font-size:48px;line-height:48px;color:#682220;font-weight:700;letter-spacing:0px;transform:scaleX(0.9934);transform-origin:0 0;">requests</div>
<div style="left:520.64px;top:375px;font-size:28px;line-height:28px;color:#172b4d;font-weight:400;letter-spacing:0px;transform:scaleX(1.0397);transform-origin:0 0;">All</div>
<div style="left:1243.01px;top:326px;font-size:25px;line-height:25px;color:#333;font-weight:400;letter-spacing:0px;transform:scaleX(1.0412);transform-origin:0 0;">Filtered by:</div>
<div style="left:1261.46px;top:375px;font-size:28px;line-height:28px;color:#172b4d;font-weight:400;letter-spacing:0px;transform:scaleX(1.0413);transform-origin:0 0;">Created date</div>
<div style="left:1572.54px;top:375px;font-size:28px;line-height:28px;color:#172b4d;font-weight:400;letter-spacing:0px;transform:scaleX(1.0457);transform-origin:0 0;">Last 30 days</div>
<div style="left:1888.88px;top:375px;font-size:28px;line-height:28px;color:#6b7280;font-weight:400;letter-spacing:0px;transform:scaleX(1.0683);transform-origin:0 0;">15/08/2025</div>
<div style="left:2204.63px;top:375px;font-size:28px;line-height:28px;color:#6b7280;font-weight:400;letter-spacing:0px;transform:scaleX(1.0665);transform-origin:0 0;">13/09/2025</div>
<div style="left:2555.46px;top:377px;font-size:19px;line-height:19px;color:#fff;font-weight:400;letter-spacing:0px;transform:scaleX(1.0107);transform-origin:0 0;-webkit-text-stroke:0.9px currentColor;">A</div>
<div style="left:2602.68px;top:374px;font-size:27px;line-height:27px;color:#172b4d;font-weight:400;letter-spacing:0px;transform:scaleX(1.0068);transform-origin:0 0;">Anna</div>
<div style="left:659.83px;top:614px;font-size:29px;line-height:29px;color:#222;font-weight:700;letter-spacing:0px;transform:scaleX(0.9845);transform-origin:0 0;">Leave Date</div>
<div style="left:983.17px;top:614px;font-size:29px;line-height:29px;color:#222;font-weight:700;letter-spacing:0px;transform:scaleX(0.9897);transform-origin:0 0;">Leave Duration</div>
<div style="left:1366.62px;top:614px;font-size:29px;line-height:29px;color:#222;font-weight:700;letter-spacing:0px;transform:scaleX(0.9801);transform-origin:0 0;">Type</div>
<div style="left:1599.74px;top:614px;font-size:29px;line-height:29px;color:#222;font-weight:700;letter-spacing:0px;transform:scaleX(0.9741);transform-origin:0 0;">Owner</div>
<div style="left:1858.78px;top:614px;font-size:29px;line-height:29px;color:#222;font-weight:700;letter-spacing:0px;transform:scaleX(0.9856);transform-origin:0 0;">Status</div>
<div style="left:2116.74px;top:614px;font-size:29px;line-height:29px;color:#222;font-weight:700;letter-spacing:0px;transform:scaleX(0.9819);transform-origin:0 0;">Created At</div>
<div style="left:2452.18px;top:614px;font-size:29px;line-height:29px;color:#222;font-weight:700;letter-spacing:0px;transform:scaleX(0.9814);transform-origin:0 0;">Actions</div>
<div style="left:659.64px;top:732px;font-size:28px;line-height:28px;color:#222;font-weight:400;letter-spacing:0px;transform:scaleX(1.0179);transform-origin:0 0;">18/08/2025</div>
<div style="left:1043.07px;top:732px;font-size:28px;line-height:28px;color:#222;font-weight:400;letter-spacing:0px;transform:scaleX(0.8676);transform-origin:0 0;">1</div>
<div style="left:1364.56px;top:732px;font-size:28px;line-height:28px;color:#222;font-weight:400;letter-spacing:0px;transform:scaleX(1.0351);transform-origin:0 0;">Paid leave</div>
<div style="left:1626.24px;top:732px;font-size:27px;line-height:27px;color:#fff;font-weight:400;letter-spacing:0px;transform:scaleX(1.0123);transform-origin:0 0;-webkit-text-stroke:1.2px currentColor;">A</div>
<div style="left:1870.15px;top:734px;font-size:22px;line-height:22px;color:#fff;font-weight:400;letter-spacing:0px;transform:scaleX(1.0434);transform-origin:0 0;">Rejected</div>
<div style="left:2115.72px;top:712px;font-size:28px;line-height:28px;color:#222;font-weight:400;letter-spacing:0px;transform:scaleX(1.0274);transform-origin:0 0;">16/08/2025 11:53</div>
<div style="left:2115.48px;top:752px;font-size:28px;line-height:28px;color:#222;font-weight:400;letter-spacing:0px;transform:scaleX(1.0680);transform-origin:0 0;">PM</div>
<div style="left:659.64px;top:878px;font-size:28px;line-height:28px;color:#222;font-weight:400;letter-spacing:0px;transform:scaleX(1.0179);transform-origin:0 0;">19/08/2025</div>
<div style="left:1042.51px;top:878px;font-size:28px;line-height:28px;color:#222;font-weight:400;letter-spacing:0px;transform:scaleX(1.0218);transform-origin:0 0;">0.5</div>
<div style="left:1364.56px;top:878px;font-size:28px;line-height:28px;color:#222;font-weight:400;letter-spacing:0px;transform:scaleX(1.0351);transform-origin:0 0;">Paid leave</div>
<div style="left:1626.24px;top:878px;font-size:27px;line-height:27px;color:#fff;font-weight:400;letter-spacing:0px;transform:scaleX(1.0123);transform-origin:0 0;-webkit-text-stroke:1.2px currentColor;">A</div>
<div style="left:1870.15px;top:880px;font-size:22px;line-height:22px;color:#fff;font-weight:400;letter-spacing:0px;transform:scaleX(1.0434);transform-origin:0 0;">Rejected</div>
<div style="left:2115.72px;top:858px;font-size:28px;line-height:28px;color:#222;font-weight:400;letter-spacing:0px;transform:scaleX(1.0274);transform-origin:0 0;">16/08/2025 11:53</div>
<div style="left:2115.48px;top:898px;font-size:28px;line-height:28px;color:#222;font-weight:400;letter-spacing:0px;transform:scaleX(1.0680);transform-origin:0 0;">PM</div>
<div style="left:660.44px;top:1024px;font-size:28px;line-height:28px;color:#222;font-weight:400;letter-spacing:0px;transform:scaleX(1.0122);transform-origin:0 0;">22/08/2025</div>
<div style="left:1043.07px;top:1024px;font-size:28px;line-height:28px;color:#222;font-weight:400;letter-spacing:0px;transform:scaleX(0.8676);transform-origin:0 0;">1</div>
<div style="left:1364.56px;top:1024px;font-size:28px;line-height:28px;color:#222;font-weight:400;letter-spacing:0px;transform:scaleX(1.0351);transform-origin:0 0;">Paid leave</div>
<div style="left:1626.24px;top:1024px;font-size:27px;line-height:27px;color:#fff;font-weight:400;letter-spacing:0px;transform:scaleX(1.0123);transform-origin:0 0;-webkit-text-stroke:1.2px currentColor;">A</div>
<div style="left:1871.68px;top:1026px;font-size:22px;line-height:22px;color:#fff;font-weight:400;letter-spacing:0px;transform:scaleX(1.0190);transform-origin:0 0;">Approved</div>
<div style="left:2116.54px;top:1004px;font-size:28px;line-height:28px;color:#222;font-weight:400;letter-spacing:0px;transform:scaleX(1.0079);transform-origin:0 0;">22/08/2025 10:51</div>
<div style="left:2117.65px;top:1044px;font-size:28px;line-height:28px;color:#222;font-weight:400;letter-spacing:0px;">AM</div>
<div style="left:660.68px;top:1166px;font-size:28px;line-height:28px;color:#222;font-weight:400;letter-spacing:0px;transform:scaleX(1.0105);transform-origin:0 0;">03/09/2025</div>
<div style="left:1043.07px;top:1166px;font-size:28px;line-height:28px;color:#222;font-weight:400;letter-spacing:0px;transform:scaleX(0.8676);transform-origin:0 0;">1</div>
<div style="left:1364.68px;top:1166px;font-size:28px;line-height:28px;color:#222;font-weight:400;letter-spacing:0px;transform:scaleX(1.0333);transform-origin:0 0;">Unpaid leave</div>
<div style="left:1626.24px;top:1166px;font-size:27px;line-height:27px;color:#fff;font-weight:400;letter-spacing:0px;transform:scaleX(1.0123);transform-origin:0 0;-webkit-text-stroke:1.2px currentColor;">A</div>
<div style="left:1870.17px;top:1168px;font-size:22px;line-height:22px;color:#fff;font-weight:400;letter-spacing:0px;transform:scaleX(1.0371);transform-origin:0 0;">Pending</div>
<div style="left:2116.53px;top:1166px;font-size:28px;line-height:28px;color:#222;font-weight:400;letter-spacing:0px;transform:scaleX(1.0159);transform-origin:0 0;">29/08/2025 11:38 AM</div>
<div style="left:660.68px;top:1304px;font-size:28px;line-height:28px;color:#222;font-weight:400;letter-spacing:0px;transform:scaleX(1.0105);transform-origin:0 0;">05/09/2025</div>
<div style="left:1043.07px;top:1304px;font-size:28px;line-height:28px;color:#222;font-weight:400;letter-spacing:0px;transform:scaleX(0.8676);transform-origin:0 0;">1</div>
<div style="left:1364.68px;top:1304px;font-size:28px;line-height:28px;color:#222;font-weight:400;letter-spacing:0px;transform:scaleX(1.0333);transform-origin:0 0;">Unpaid leave</div>
<div style="left:1626.24px;top:1304px;font-size:27px;line-height:27px;color:#fff;font-weight:400;letter-spacing:0px;transform:scaleX(1.0123);transform-origin:0 0;-webkit-text-stroke:1.2px currentColor;">A</div>
<div style="left:1870.17px;top:1306px;font-size:22px;line-height:22px;color:#fff;font-weight:400;letter-spacing:0px;transform:scaleX(1.0371);transform-origin:0 0;">Pending</div>
<div style="left:2116.53px;top:1304px;font-size:28px;line-height:28px;color:#222;font-weight:400;letter-spacing:0px;transform:scaleX(1.0159);transform-origin:0 0;">29/08/2025 11:39 AM</div>
<div style="left:659.64px;top:1446px;font-size:28px;line-height:28px;color:#222;font-weight:400;letter-spacing:0px;transform:scaleX(1.0179);transform-origin:0 0;">10/10/2025</div>
<div style="left:1043.07px;top:1446px;font-size:28px;line-height:28px;color:#222;font-weight:400;letter-spacing:0px;transform:scaleX(0.8676);transform-origin:0 0;">1</div>
<div style="left:1365.43px;top:1446px;font-size:28px;line-height:28px;color:#222;font-weight:400;letter-spacing:0px;transform:scaleX(1.0329);transform-origin:0 0;">Sick leave</div>
<div style="left:1626.24px;top:1446px;font-size:27px;line-height:27px;color:#fff;font-weight:400;letter-spacing:0px;transform:scaleX(1.0123);transform-origin:0 0;-webkit-text-stroke:1.2px currentColor;">A</div>
<div style="left:1870.17px;top:1448px;font-size:22px;line-height:22px;color:#fff;font-weight:400;letter-spacing:0px;transform:scaleX(1.0371);transform-origin:0 0;">Pending</div>
<div style="left:2116.53px;top:1426px;font-size:28px;line-height:28px;color:#222;font-weight:400;letter-spacing:0px;transform:scaleX(1.0176);transform-origin:0 0;">29/08/2025 02:00</div>
<div style="left:2115.48px;top:1466px;font-size:28px;line-height:28px;color:#222;font-weight:400;letter-spacing:0px;transform:scaleX(1.0680);transform-origin:0 0;">PM</div>
</div>
</body></html>
